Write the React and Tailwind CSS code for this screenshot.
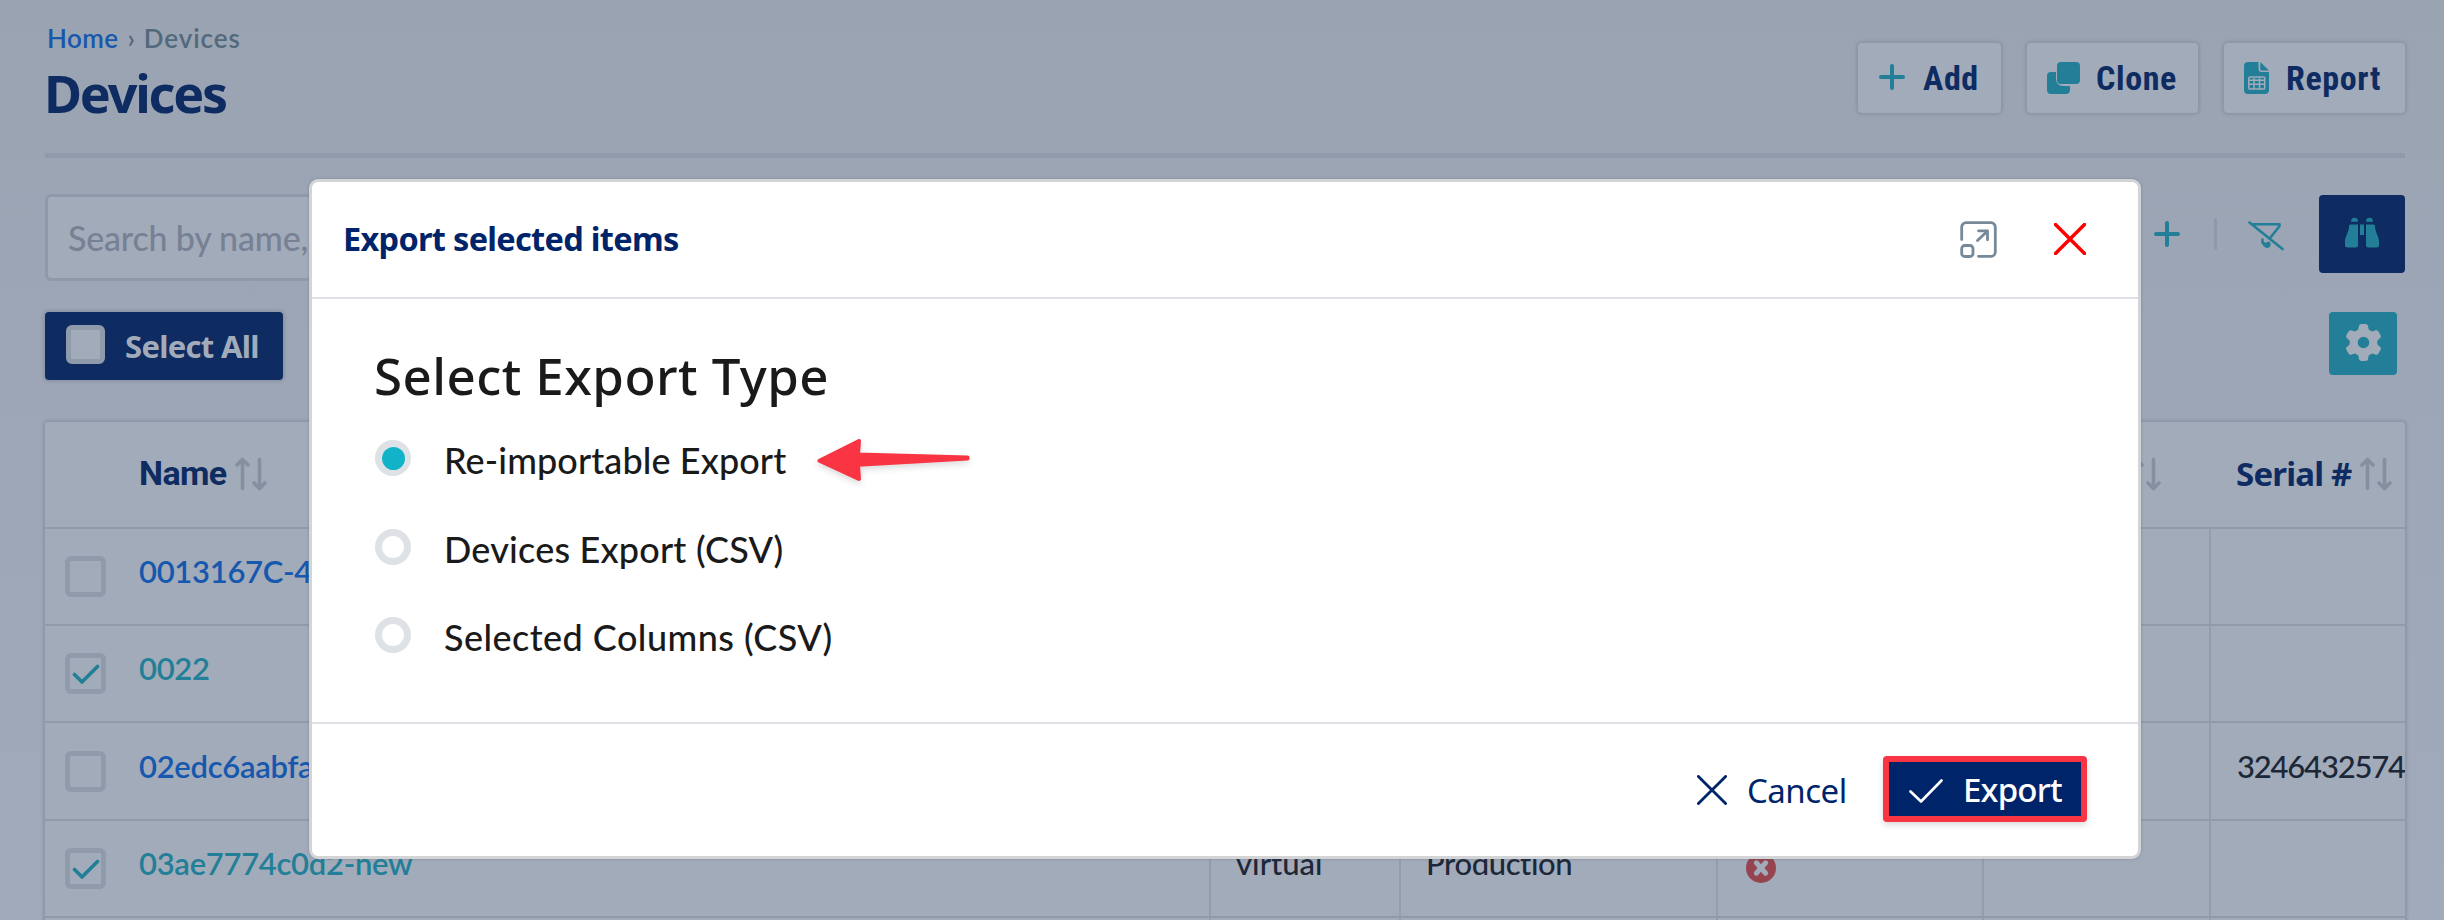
import React from 'react';
import { FaGear } from 'react-icons/fa6';

const NOTO = "font-['Noto_Sans',sans-serif]";
const ROBOTO = "font-['Roboto',sans-serif]";

function Plus({ className = '' }) {
  return (
    <svg viewBox="0 0 26 26" className={`size-[26px] shrink-0 text-[#227f97] ${className}`} fill="none" stroke="currentColor" strokeWidth="4" strokeLinecap="round">
      <path d="M13 2v22M2 13h22" />
    </svg>
  );
}

function CloneIcon() {
  return (
    <svg viewBox="0 0 33 32" className="h-8 w-[33px] shrink-0 text-[#227f97]" fill="currentColor">
      <path d="M4 10H9v7a7 7 0 0 0 7 7h7v4a4 4 0 0 1-4 4H4a4 4 0 0 1-4-4V14a4 4 0 0 1 4-4z" />
      <rect x="10" y="0" width="23" height="22" rx="4" />
    </svg>
  );
}

function SheetIcon() {
  return (
    <svg viewBox="0 0 25 32" className="h-8 w-[25px] shrink-0 text-[#227f97]">
      <path fill="currentColor" d="M4 0h10.500v7a3 3 0 0 0 3 3H25v18a4 4 0 0 1-4 4H4a4 4 0 0 1-4-4V4a4 4 0 0 1 4-4zM16.300 0L25 8.600h-7.200a1.500 1.500 0 0 1-1.500-1.500z" />
      <path fill="none" stroke="#a2abba" strokeWidth="1.500" d="M6 14.900h13.500a1.200 1.200 0 0 1 1.200 1.200v9.800a1.200 1.200 0 0 1-1.200 1.200H6a1.200 1.200 0 0 1-1.200-1.200v-9.800A1.200 1.200 0 0 1 6 14.900zM5 18.200h15.500M5 22.300h15.500M10 16v11M15.500 16v11" />
    </svg>
  );
}

function FilterOff({ className = '' }) {
  return (
    <svg viewBox="0 0 36 30" className={`h-[30px] w-9 shrink-0 text-[#227f97] ${className}`} fill="none" stroke="currentColor" strokeWidth="2.600" strokeLinecap="round" strokeLinejoin="round">
      <path d="M1.500 1.500L34.500 28M5 3.200h26.500v2L22 17M14.500 18.500v3l4 4.200 1-.3" />
      <path strokeWidth="4" d="M17 23.500l3.500 1v-2" />
    </svg>
  );
}

function Binoculars() {
  return (
    <svg viewBox="0 0 34 31" className="h-[31px] w-[34px] text-[#227f97]" fill="currentColor">
      <path d="M6 4.800a3.500 4 0 0 1 7 0zM21 4.800a3.500 4 0 0 1 7 0zM15 7.500h4v10.500h-4z" />
      <path d="M5.500 7.500h7.500v20.500a2.500 2.500 0 0 1-2.500 2.500H2.500A2.500 2.500 0 0 1 0 28v-4C.2 19.500 4 15 4 9a1.500 1.500 0 0 1 1.500-1.500zM28.500 7.500H21v20.500a2.500 2.500 0 0 0 2.500 2.500h8A2.500 2.500 0 0 0 34 28v-4c-.2-4.500-4-9-4-15a1.500 1.500 0 0 0-1.500-1.500z" />
    </svg>
  );
}

function SortIcon({ className = '' }) {
  return (
    <svg viewBox="0 0 32 34" className={`h-[34px] w-8 shrink-0 text-[#858fa0] ${className}`} fill="none" stroke="currentColor" strokeWidth="3.600" strokeLinecap="round" strokeLinejoin="round">
      <path d="M7.500 31.500V2.500M2 8l5.500-5.500L13 8M24.500 2.500v29M19 26l5.500 5.500L30 26" />
    </svg>
  );
}

function Cross({ className }) {
  return (
    <svg viewBox="0 0 32 32" className={`shrink-0 ${className}`} fill="none" stroke="currentColor" strokeLinecap="round">
      <path d="M1.500 1.500l29 29M30.500 1.500l-29 29" />
    </svg>
  );
}

function ExpandIcon() {
  return (
    <svg viewBox="0 0 37 37" className="mr-px mb-px size-[37px] shrink-0 text-[#758998]" fill="none" stroke="currentColor" strokeWidth="2.800" strokeLinecap="round" strokeLinejoin="round">
      <path d="M1.700 18.500V6A4.300 4.300 0 0 1 6 1.700h25A4.300 4.300 0 0 1 35.300 6v25a4.300 4.300 0 0 1-4.300 4.300H18.500" />
      <rect x="1.700" y="24.500" width="11.300" height="11" rx="3" />
      <path d="M17.500 19.500L27.500 10M18.500 9.800h9v9" />
    </svg>
  );
}

function ActionButton({ icon, label, className }) {
  return (
    <button className={`flex h-[70px] items-center rounded-[4px] bg-[#a2abba] shadow-[0_0_3px_2px_#8c95a5] ${className}`}>
      {icon}
      <span className={`${ROBOTO} text-[34px] leading-10 font-bold font-stretch-semi-condensed tracking-[0.6px] text-[#0e2c61]`}>{label}</span>
    </button>
  );
}

function Checkbox({ checked }) {
  return (
    <span className="flex size-[41px] shrink-0 items-center justify-center rounded-[6px] border-[5px] border-[#8f9bab]">
      {checked && (
        <svg viewBox="0 0 28 20" className="h-5 w-7 shrink-0 text-[#227f97]" fill="none" stroke="currentColor" strokeWidth="3.600" strokeLinecap="round" strokeLinejoin="round">
          <path d="M2.500 10.500l7.500 7.500L25.500 2.500" />
        </svg>
      )}
    </span>
  );
}

const COLS = 'grid grid-cols-[1166px_190px_317px_266px_227px_194px]';
const ROWS = [
  { name: '0013167C-43', h: 'h-[97px]' },
  { name: '0022', checked: true, h: 'h-[97px]' },
  { name: '02edc6aabfa', h: 'h-[98px]', serial: '3246432574' },
  { name: '03ae7774c0d2-new', checked: true, h: 'h-[97px]', type: 'virtual', env: 'Production', failed: true },
  { name: '', blank: true, h: 'h-[97px]' },
];
const CELL = 'flex items-center border-r-2 border-[#929dad] pl-[25px] pb-[11px]';

function Row({ row }) {
  return (
    <div className={`${COLS} ${row.h} shrink-0 border-b-2 border-[#8f9bab] text-[31px] font-medium text-[#1c2738]`}>
      <div className="flex items-center border-r-2 border-[#929dad] pl-5">
        {!row.blank && <Checkbox checked={row.checked} />}
        <span className={`pb-[10px] pl-[33px] font-semibold tracking-[-0.300px] ${row.checked ? 'text-[#227f97]' : 'text-[#1658ad]'}`}>{row.name}</span>
      </div>
      <div className={CELL}>{row.type}</div>
      <div className={`${CELL} tracking-[-0.4px]`}>{row.env}</div>
      <div className="flex items-center border-r-2 border-[#929dad] pb-[2px] pl-7">
        {row.failed && (
          <svg viewBox="0 0 30 30" className="size-[30px]">
            <circle cx="15" cy="15" r="15" fill="#954450" />
            <path d="M10.300 9.800l9.400 10.400M19.700 9.800l-9.400 10.400" stroke="#a2abba" strokeWidth="5" strokeLinecap="round" />
          </svg>
        )}
      </div>
      <div className="border-r-2 border-[#929dad]" />
      <div className="flex items-center overflow-hidden pb-[9px] pl-[26px] tracking-[-1.200px]">{row.serial}</div>
    </div>
  );
}

function HeaderLabel({ children }) {
  return <span className={`${NOTO} pb-[2px] text-[33px] leading-10 font-bold tracking-[-0.8px] text-[#0e2c61]`}>{children}</span>;
}

function Option({ label, selected, className = '' }) {
  return (
    <label className="flex h-[88.500px] items-center">
      <span className="flex size-9 shrink-0 items-center justify-center rounded-full border-[7px] border-[#dee2e6]">
        {selected && <span className="size-[23px] shrink-0 rounded-full bg-[#10b3c7]" />}
      </span>
      <span className={`pt-1 pl-[33px] text-[36px] leading-[44px] font-medium text-[#1a1a1a] ${className}`}>{label}</span>
    </label>
  );
}

export default function App() {
  return (
    <div className="relative h-[920px] w-full overflow-hidden bg-linear-to-b from-[#9aa3b1] via-[#9ea7b8] to-[#a1aaba] font-['Lato',sans-serif]">
      <div className="flex h-full flex-col pr-[39px] pl-[45px]">
        <header className="flex h-[158px] shrink-0 justify-between border-b-[5px] border-[#8f9bab]">
          <div className="pt-[23px] pl-[2px] whitespace-nowrap">
            <nav className="flex text-[26px] leading-[30px] font-semibold text-[#52697d]">
              <span className="tracking-[0.4px] text-[#1658ad]">Home</span>
              <span className="px-[9px]">›</span>
              <span className="tracking-[0.9px]">Devices</span>
            </nav>
            <h1 className={`${NOTO} mt-[10px] -ml-[3px] text-[52px] leading-[60px] font-bold tracking-[-2.200px] text-[#0e2c61]`}>Devices</h1>
          </div>
          <div className="flex gap-[26px] pt-[43px]">
            <ActionButton icon={<Plus className="mb-[2px]" />} label="Add" className="w-[143px] gap-[18px] pl-[21px]" />
            <ActionButton icon={<CloneIcon />} label="Clone" className="w-[171px] gap-4 pl-5" />
            <ActionButton icon={<SheetIcon />} label="Report" className="w-[181px] gap-[17px] pl-5" />
          </div>
        </header>

        <div className="flex h-[154px] shrink-0 justify-between pt-9">
          <div className="flex h-[87px] w-[900px] items-center rounded-[6px] border-[3px] border-[#8f99a9] bg-[#a2abba] pl-5 text-[34px] font-medium tracking-[-0.2px] text-[#768194]">
            Search by name,
          </div>
          <div className="flex h-20 items-center">
            <Plus />
            <span className="ml-[34px] h-8 w-[3px] rounded bg-[#8f99a9]" />
            <FilterOff className="mt-1 ml-[31px]" />
            <button className="ml-[35px] flex h-[78px] w-[86px] items-center justify-center rounded-[4px] bg-[#0e2c61] pb-1"><Binoculars /></button>
          </div>
        </div>

        <div className="flex h-[110px] shrink-0 justify-between pr-2">
          <button className="flex h-[68px] w-[238px] items-center rounded-[4px] bg-[#0e2c61] pl-[21px] shadow-[0_0_3px_2px_#8c95a5]">
            <span className="mb-1 size-[39px] rounded-[6px] border-[5px] border-[#8f9bab] bg-[#a2abba]" />
            <span className={`${NOTO} pl-5 text-[31px] leading-10 font-bold tracking-[-0.7px] text-[#a2abba]`}>Select All</span>
          </button>
          <button className="flex h-[63px] w-[68px] items-center justify-center rounded-[4px] bg-[#227f97] pb-[2px]">
            <FaGear className="size-[37px] text-[#a2abba]" />
          </button>
        </div>

        <div className="flex h-[600px] w-[2360px] shrink-0 flex-col rounded-t-[3px] bg-[#a2abba] shadow-[0_0_3px_2px_#8c95a5]">
          <div className={`${COLS} h-[107px] shrink-0 items-center border-b-2 border-[#8f9bab] whitespace-nowrap`}>
            <div className="flex items-center pl-[94px]">
              <span className={`${ROBOTO} pb-[3px] text-[34px] leading-10 font-bold tracking-[-0.600px] text-[#0e2c61]`}>Name</span>
              <SortIcon className="mb-[2px] ml-2" />
            </div>
            <div />
            <div />
            <div />
            <div className="pl-[145px]"><SortIcon className="mb-[2px]" /></div>
            <div className="flex items-center pl-[25px]">
              <HeaderLabel>Serial #</HeaderLabel>
              <SortIcon className="mb-[2px] ml-2" />
            </div>
          </div>
          {ROWS.map((row) => <Row key={row.name} row={row} />)}
        </div>
      </div>

      <section className="absolute top-[179px] left-[309px] flex h-[680px] w-[1832px] flex-col rounded-[9px] border-[3px] border-[#d3d4d6] bg-white shadow-[0_0_3px_rgba(80,90,110,0.400)]">
        <div className="flex h-[117px] shrink-0 items-center border-b-2 border-[#dee2e6] pr-[52px] pl-[31px]">
          <h2 className={`${NOTO} grow pb-[2px] text-[32.500px] leading-10 font-bold tracking-[-0.700px] text-[#00246a]`}>Export selected items</h2>
          <ExpandIcon />
          <Cross className="mb-px ml-14 size-8 stroke-[3.500px] text-[#ff0000]" />
        </div>
        <div className="h-[423px] shrink-0 pt-[46px] pl-[63px]">
          <h3 className={`${NOTO} -ml-px text-[51px] leading-[60px] font-medium tracking-[0.450px] text-[#1a1a1a]`}>Select Export Type</h3>
          <div className="mt-[9px]">
            <Option label="Re-importable Export" selected className="tracking-[0.100px]" />
            <Option label="Devices Export (CSV)" className="tracking-[0.200px]" />
            <Option label="Selected Columns (CSV)" className="tracking-[0.450px]" />
          </div>
        </div>
        <div className="flex grow items-center justify-end border-t-2 border-[#dee2e6] pr-[51px]">
          <Cross className="size-[30px] stroke-[3px] text-[#00246a]" />
          <span className={`${NOTO} w-[136px] pt-px pl-5 text-[33px] leading-10 tracking-[-0.500px] text-[#00246a]`}>Cancel</span>
          <button className="mb-[2px] ml-5 flex h-[66px] w-[204px] items-center rounded-[4px] border-[6px] border-[#f93443] bg-[#00246a] pl-5 text-white shadow-[0_3px_6px_rgba(0,0,0,0.150)]">
            <svg viewBox="0 0 34 24" className="mt-1 h-6 w-[34px]" fill="none" stroke="currentColor" strokeWidth="2.600" strokeLinecap="round" strokeLinejoin="round">
              <path d="M1.500 12.500L12 22.500 32.500 1.500" />
            </svg>
            <span className={`${NOTO} pt-[2px] pl-5 text-[33px] leading-10 font-medium tracking-[-0.800px]`}>Export</span>
          </button>
        </div>
      </section>

      <svg viewBox="0 0 156 50" className="absolute top-[436px] left-[816px] h-[50px] w-[156px] drop-shadow-[0_3px_3px_rgba(0,0,0,0.150)]" fill="#f93443" stroke="#f93443" strokeWidth="4" strokeLinejoin="round">
        <path d="M3.500 24.700L43 5 42 18.500 151.500 21.500v1L42 28.800 43 43z" />
      </svg>
    </div>
  );
}
